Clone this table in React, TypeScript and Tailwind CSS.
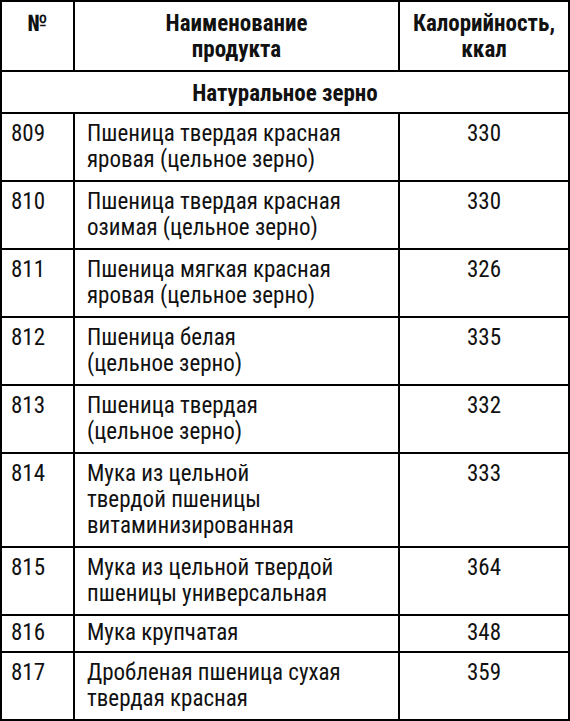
type Row = {
  id: string;
  name: string[];
  kcal: string;
  pad?: string;
};

const rows: Row[] = [
  { id: "809", name: ["Пшеница твердая красная", "яровая (цельное зерно)"], kcal: "330" },
  { id: "810", name: ["Пшеница твердая красная", "озимая (цельное зерно)"], kcal: "330" },
  { id: "811", name: ["Пшеница мягкая красная", "яровая (цельное зерно)"], kcal: "326" },
  { id: "812", name: ["Пшеница белая", "(цельное зерно)"], kcal: "335" },
  { id: "813", name: ["Пшеница твердая", "(цельное зерно)"], kcal: "332" },
  { id: "814", name: ["Мука из цельной", "твердой пшеницы", "витаминизированная"], kcal: "333" },
  { id: "815", name: ["Мука из цельной твердой", "пшеницы универсальная"], kcal: "364" },
  { id: "816", name: ["Мука крупчатая"], kcal: "348", pad: "pt-[4px] pb-[5px]" },
  { id: "817", name: ["Дробленая пшеница сухая", "твердая красная"], kcal: "359" },
];

export default function App() {
  return (
    <div className="bg-white text-[#111] font-['Roboto_Condensed',_'Liberation_Sans',_sans-serif] text-[23px] leading-[26px]">
      <table className="w-[570px] table-fixed border-collapse border-2 border-black">
        <colgroup>
          <col className="w-[73px]" />
          <col className="w-[325px]" />
          <col />
        </colgroup>
        <thead>
          <tr>
            <th className="border-2 border-black pt-[9px] pb-[7px] text-center align-top font-bold">№</th>
            <th className="border-2 border-black pt-[9px] pb-[7px] text-center align-top font-bold">
              Наименование
              <br />
              продукта
            </th>
            <th className="border-2 border-black pt-[9px] pb-[7px] text-center align-top font-bold">
              Калорийность,
              <br />
              ккал
            </th>
          </tr>
        </thead>
        <tbody>
          {/* section heading */}
          <tr>
            <td colSpan={3} className="border-2 border-black pt-[9px] pb-[5px] text-center font-bold">
              Натуральное зерно
            </td>
          </tr>
          {rows.map((r) => (
            <tr key={r.id}>
              <td className={`border-2 border-black pl-[9px] align-top ${r.pad ?? "py-[7px]"}`}>{r.id}</td>
              <td className={`border-2 border-black pl-[12px] align-top ${r.pad ?? "py-[7px]"}`}>
                {r.name.map((line, i) => (
                  <div key={i}>{line}</div>
                ))}
              </td>
              <td className={`border-2 border-black text-center align-top ${r.pad ?? "py-[7px]"}`}>{r.kcal}</td>
            </tr>
          ))}
        </tbody>
      </table>
    </div>
  );
}
